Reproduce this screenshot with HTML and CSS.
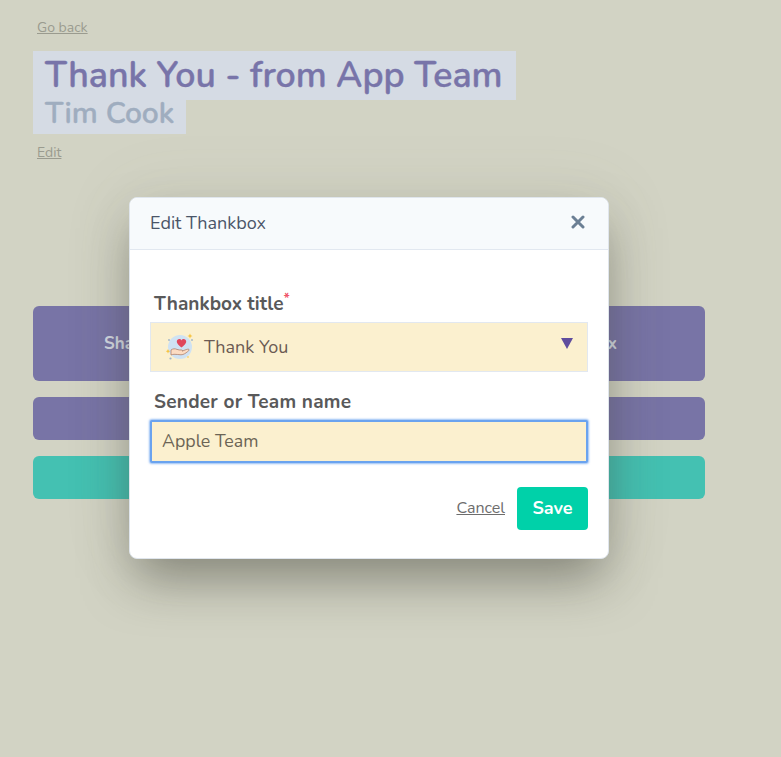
FILE: index.html
```
<!DOCTYPE html>
<html lang="en">
<head>
<meta charset="utf-8">
<title>Edit Thankbox</title>
<link rel="stylesheet" href="styles.css">
</head>
<body>
<main class="page">
  <a class="muted-link back" href="#">Go back</a>
  <h1 class="heading">
    <span class="title">Thank You - from App Team</span>
    <span class="sender">Tim Cook</span>
  </h1>
  <a class="muted-link edit" href="#">Edit</a>
  <div class="actions">
    <div class="btn btn-tall"><span class="share">Share</span><span class="view">Thankbox</span></div>
    <div class="btn btn-purple"></div>
    <div class="btn btn-teal"></div>
  </div>
</main>
<section class="modal">
  <header class="modal-head">
    <span class="modal-title">Edit Thankbox</span>
    <svg class="close" viewBox="0 0 14 14" width="14" height="14"><path d="M2 2l10 10M12 2L2 12" fill="none" stroke="#6b7f94" stroke-width="3" stroke-linecap="round"/></svg>
  </header>
  <div class="modal-body">
    <label class="label label-first">Thankbox title<sup class="req">*</sup></label>
    <div class="select">
      <svg class="occasion" viewBox="0 0 30 30" width="30" height="30">
        <circle cx="15" cy="15" r="12" fill="#cfe2f3"/>
        <path d="M16.500 15.500c-1.300-1.300-4.700-3.400-4.700-6 0-2.800 3.700-3.400 4.700-1 1-2.400 4.700-1.800 4.700 1 0 2.600-3.400 4.700-4.700 6z" fill="#e0475c"/>
        <path d="M6 18c2-1.500 4-1.500 6-.6 1.500.7 3 .6 4.500.6.900 0 1.300.8.500 1.200l3-1.200c1.500-.6 3.500-1.200 4-.5.500.8-.8 1.700-1.500 2.200-1.800 1.500-3.800 3-6.500 3.100-2.500.1-5-.8-7-.5-1.200.1-2 .4-3 .7z" fill="#fcdcc3" stroke="#a9745c" stroke-width=".7" stroke-linejoin="round"/>
        <path d="M25 1.500l.8 1.700 1.700.8-1.700.8-.8 1.700-.8-1.700-1.700-.8 1.700-.8z" fill="#f6c544"/>
        <circle cx="27" cy="8" r=".9" fill="#9fb4c8"/>
        <path d="M3 17l.7 1.500 1.500.7-1.500.7-.7 1.500-.7-1.500-1.500-.7 1.500-.7z" fill="#f6c544"/>
        <circle cx="4" cy="8" r=".9" fill="#9fb4c8"/>
        <circle cx="5.500" cy="26.500" r="1.100" fill="#9fb4c8"/>
        <circle cx="23" cy="25" r=".8" fill="#f6c544"/>
      </svg>
      <span class="select-text">Thank You</span>
      <svg class="caret" viewBox="0 0 12 11" width="12" height="11"><path d="M0 0h12L6 11z" fill="#5f4d9e"/></svg>
    </div>
    <label class="label label-second">Sender or Team name</label>
    <div class="input">Apple Team</div>
    <footer class="modal-foot">
      <a class="cancel" href="#">Cancel</a>
      <button class="save" type="button">Save</button>
    </footer>
  </div>
</section>
</body>
</html>
```
FILE: styles.css
```
* { box-sizing: border-box; }
html, body { margin: 0; height: 100%; }
body {
  position: relative;
  min-height: 757px;
  background: #d2d3c4;
  font-family: "Nunito", "Lato", "Noto Sans", sans-serif;
  overflow: hidden;
}
.page {
  display: flex;
  flex-direction: column;
  align-items: flex-start;
  width: 738px;
  padding: 19px 33px 0;
}
.muted-link {
  margin-left: 4px;
  color: #9a9b8f;
  font-size: 14px;
  line-height: 18px;
  text-decoration: underline;
}
.heading {
  display: flex;
  flex-direction: column;
  align-items: flex-start;
  margin: 14px 0 0;
  font-weight: 600;
  white-space: nowrap;
  -webkit-text-stroke: .4px currentColor;
}
.title, .sender {
  display: block;
  background: #d5dbe4;
  padding: 0 12px;
}
.title {
  padding-right: 13px;
  color: #7874a9;
  font-size: 35.750px;
  line-height: 49px;
}
.sender {
  color: #9fadbf;
  font-size: 30px;
  line-height: 27px;
  height: 34px;
}
.edit { margin-top: 10px; }
.actions {
  display: flex;
  flex-direction: column;
  gap: 16px;
  width: 672px;
  margin-top: 144px;
}
.btn { border-radius: 6px; }
.btn-tall {
  display: flex;
  align-items: center;
  justify-content: space-between;
  height: 75px;
  padding: 0 88px 0 71px;
  background: #7874a6;
  color: #d5dbe4;
  font-size: 17px;
  font-weight: 700;
}
.btn-purple { height: 43px; background: #7874a6; }
.btn-teal { height: 43px; background: #44c1b2; }
.modal {
  position: absolute;
  left: 129px;
  top: 197px;
  width: 480px;
  height: 362px;
  background: #fff;
  border: 1px solid #dfe5ec;
  border-radius: 8px;
  overflow: visible;
  box-shadow: 0 25px 50px -6px rgba(60, 60, 50, .5), 0 0 70px 10px rgba(120, 120, 105, .06);
}
.modal-head {
  display: flex;
  align-items: center;
  justify-content: space-between;
  height: 52px;
  padding: 0 23px 2px 20px;
  background: #f7fafc;
  border-bottom: 1px solid #e2e8f0;
  border-radius: 8px 8px 0 0;
}
.modal-title { color: #4a5568; font-size: 18px; }
.close { margin-top: -1px; }
.modal-body { padding: 0 20px; }
.label {
  display: block;
  margin-left: 4px;
  color: #59595a;
  font-size: 19px;
  font-weight: 700;
  line-height: 24px;
}
.label-first { margin-top: 42px; }
.label-second { margin-top: 18px; letter-spacing: .25px; }
.req {
  color: #f0566a;
  font-size: 14px;
  line-height: 0;
  vertical-align: 7px;
}
.select {
  display: flex;
  align-items: center;
  height: 50px;
  margin-top: 6px;
  padding: 0 14px 0 14px;
  background: #fbf0cf;
  border: 1px solid #e2e8f0;
}
.occasion { flex: none; }
.select-text {
  flex: 1;
  margin-left: 9px;
  color: #6b5b53;
  font-size: 18px;
}
.caret { margin-top: -8px; }
.input {
  display: flex;
  align-items: center;
  height: 43px;
  margin-top: 6px;
  padding: 0 10px 1px;
  background: #fbf0cf;
  border: 2px solid #6aa3ef;
  border-radius: 2px;
  box-shadow: 0 0 2px 1px rgba(106, 163, 239, .7);
  color: #6b6455;
  font-size: 17.800px;
}
.modal-foot {
  display: flex;
  align-items: center;
  justify-content: flex-end;
  gap: 12px;
  margin-top: 24px;
}
.cancel {
  margin-bottom: 2px;
  color: #6d6d6d;
  font-size: 16px;
  text-decoration: underline;
}
.save {
  width: 71px;
  height: 43px;
  padding: 0 0 2px;
  border: 0;
  border-radius: 4px;
  background: #00d1a9;
  color: #fff;
  font-family: inherit;
  font-size: 18px;
  font-weight: 700;
}
```
